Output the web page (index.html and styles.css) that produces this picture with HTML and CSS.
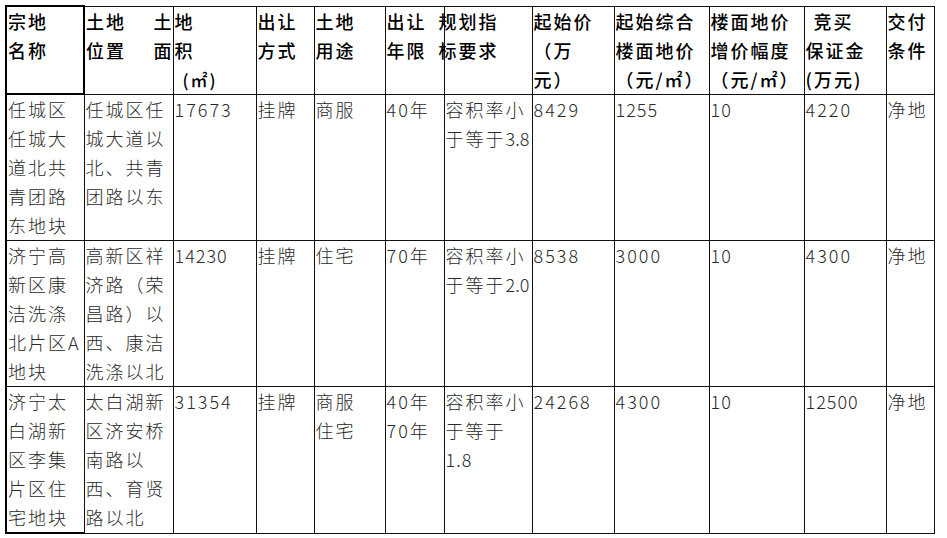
FILE: index.html
```html
<!DOCTYPE html>
<html lang="zh-CN">
<head>
<meta charset="utf-8">
<title>土地出让公告</title>
<link rel="stylesheet" href="styles.css">
</head>
<body>
<div class="page">
<table class="land">
<colgroup>
<col class="c1"><col class="c2"><col class="c3"><col class="c4"><col class="c5"><col class="c6"><col class="c7"><col class="c8"><col class="c9"><col class="c10"><col class="c11"><col class="c12">
</colgroup>
<thead>
<tr class="head">
<th class="first">宗地<br>名称</th>
<th><div class="split"><span>土地</span><span>土</span></div><div class="split"><span>位置</span><span>面</span></div></th>
<th>地<br>积<br><span class="unit">(㎡)</span></th>
<th>出让<br>方式</th>
<th>土地<br>用途</th>
<th>出让<br>年限</th>
<th><div class="shift">规划指<br>标要求</div></th>
<th>起始价<br>（万<br>元）</th>
<th>起始综合<br>楼面地价<br>（元/㎡）</th>
<th>楼面地价<br>增价幅度<br>（元/㎡）</th>
<th><span class="indent">竞买</span><br>保证金<br>(万元)</th>
<th>交付<br>条件</th>
</tr>
</thead>
<tbody>
<tr>
<td class="first">任城区<br>任城大<br>道北共<br>青团路<br>东地块</td>
<td>任城区任<br>城大道以<br>北、共青<br>团路以东</td>
<td class="num">17673</td>
<td>挂牌</td>
<td>商服</td>
<td class="num">40年</td>
<td>容积率小<br>于等于<span class="num">3.8</span></td>
<td class="num">8429</td>
<td class="num wide">1255</td>
<td class="num wide">10</td>
<td class="num">4220</td>
<td>净地</td>
</tr>
<tr>
<td class="first">济宁高<br>新区康<br>洁洗涤<br>北片区A<br>地块</td>
<td>高新区祥<br>济路（荣<br>昌路）以<br>西、康洁<br>洗涤以北</td>
<td class="num wide">14230</td>
<td>挂牌</td>
<td>住宅</td>
<td class="num">70年</td>
<td>容积率小<br>于等于<span class="num">2.0</span></td>
<td class="num">8538</td>
<td class="num">3000</td>
<td class="num wide">10</td>
<td class="num">4300</td>
<td>净地</td>
</tr>
<tr class="last">
<td class="first">济宁太<br>白湖新<br>区李集<br>片区住<br>宅地块</td>
<td>太白湖新<br>区济安桥<br>南路以<br>西、育贤<br>路以北</td>
<td class="num">31354</td>
<td>挂牌</td>
<td>商服<br>住宅</td>
<td class="num">40年<br>70年</td>
<td>容积率小<br>于等于<br><span class="num wide">1.8</span></td>
<td class="num">24268</td>
<td class="num">4300</td>
<td class="num wide">10</td>
<td class="num wide">12500</td>
<td>净地</td>
</tr>
</tbody>
</table>
</div>
</body>
</html>
```

FILE: styles.css
```css
html, body {
  margin: 0;
  padding: 0;
  background: #ffffff;
}

.page {
  padding: 5px 0 0 5px;
}

.land {
  border-collapse: collapse;
  table-layout: fixed;
  width: 929px;
  font-family: "Noto Sans CJK SC", "Noto Sans", sans-serif;
  font-size: 18px;
  line-height: 29px;
}

.c1 { width: 78px; }
.c2 { width: 89px; }
.c3 { width: 83px; }
.c4 { width: 58px; }
.c5 { width: 71px; }
.c6 { width: 59px; }
.c7 { width: 88px; }
.c8 { width: 82px; }
.c9 { width: 95px; }
.c10 { width: 95px; }
.c11 { width: 82px; }
.c12 { width: 48px; }

.land th,
.land td {
  border: 1px solid #111;
  padding: 0 1px;
  vertical-align: top;
  text-align: left;
  overflow: visible;
  white-space: nowrap;
}

.land th {
  font-weight: 500;
  color: #000;
  letter-spacing: 2px;
  height: 85px;
}

.land td {
  font-weight: 300;
  color: #2a2a2a;
  letter-spacing: 2px;
  height: 145px;
}

.land th.first,
.land td.first {
  border-left: 2px solid #000;
}

.land th.first {
  border: 2px solid #000;
}

.land tr.last td.first {
  border-bottom: 2px solid #000;
}

.split {
  display: flex;
  justify-content: space-between;
  margin-right: -2px;
}

.unit {
  display: inline-block;
  padding-left: 8px;
  font-size: 17px;
}

.shift {
  margin-left: -7px;
}

.indent {
  padding-left: 8px;
}

.num {
  letter-spacing: 0;
}

.num.wide {
  letter-spacing: 1px;
}
```
